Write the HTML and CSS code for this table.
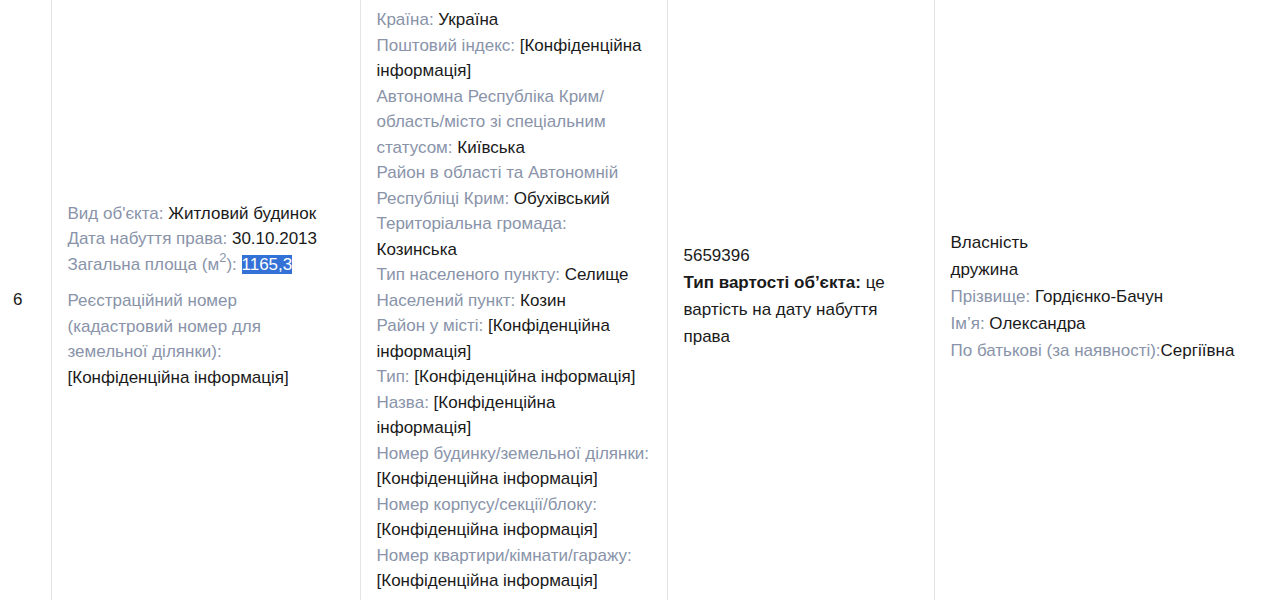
FILE: index.html
```html
<!DOCTYPE html>
<html lang="uk">
<head>
<meta charset="utf-8">
<link rel="stylesheet" href="styles.css">
</head>
<body>
<table class="decl">
  <colgroup>
    <col class="c-num">
    <col class="c-obj">
    <col class="c-addr">
    <col class="c-cost">
    <col class="c-own">
  </colgroup>
  <tr>
    <td class="num">6</td>
    <td>
      <div class="block">
        <span class="lbl">Вид об'єкта:</span> Житловий будинок<br>
        <span class="lbl">Дата набуття права:</span> 30.10.2013<br>
        <span class="lbl">Загальна площа (м<sup>2</sup>):</span> <span class="sel">1165,3</span>
      </div>
      <div class="block gap">
        <span class="lbl">Реєстраційний номер (кадастровий номер для земельної ділянки):</span><br>
        [Конфіденційна інформація]
      </div>
    </td>
    <td>
      <span class="lbl">Країна:</span> Україна<br>
      <span class="lbl">Поштовий індекс:</span> [Конфіденційна інформація]<br>
      <span class="lbl">Автономна Республіка Крим/ область/місто зі спеціальним статусом:</span> Київська<br>
      <span class="lbl">Район в області та Автономній Республіці Крим:</span> Обухівський<br>
      <span class="lbl">Територіальна громада:</span> Козинська<br>
      <span class="lbl">Тип населеного пункту:</span> Селище<br>
      <span class="lbl">Населений пункт:</span> Козин<br>
      <span class="lbl">Район у місті:</span> [Конфіденційна інформація]<br>
      <span class="lbl">Тип:</span> [Конфіденційна інформація]<br>
      <span class="lbl">Назва:</span> [Конфіденційна інформація]<br>
      <span class="lbl">Номер будинку/земельної ділянки:</span> [Конфіденційна інформація]<br>
      <span class="lbl">Номер корпусу/секції/блоку:</span> [Конфіденційна інформація]<br>
      <span class="lbl">Номер квартири/кімнати/гаражу:</span> [Конфіденційна інформація]
    </td>
    <td class="wide">
      5659396<br>
      <b>Тип вартості об’єкта:</b> це вартість на дату набуття права
    </td>
    <td class="wide">
      Власність<br>
      дружина<br>
      <span class="lbl">Прізвище:</span> Гордієнко-Бачун<br>
      <span class="lbl">Ім’я:</span> Олександра<br>
      <span class="lbl">По батькові (за наявності):</span>Сергіївна
    </td>
  </tr>
</table>
</body>
</html>
```
FILE: styles.css
```css
html, body {
  margin: 0;
  padding: 0;
  background: #fff;
}
body {
  font-family: "Liberation Sans", Arial, sans-serif;
  font-size: 17px;
  line-height: 25.5px;
  color: #1a1a1a;
  overflow: hidden;
}
.decl {
  border-collapse: collapse;
  table-layout: fixed;
  width: 1281px;
}
.c-num { width: 51px; }
.c-obj { width: 309px; }
.c-addr { width: 307px; }
.c-cost { width: 267px; }
.c-own { width: 347px; }
.decl td {
  vertical-align: middle;
  padding: 7px 16px 16px;
  border-left: 1px solid #e4e4e4;
  border-right: 1px solid #e4e4e4;
}
.decl td.num {
  border-left: none;
  padding-left: 13px;
  padding-right: 8px;
  padding-top: 6px;
}
.decl td.wide {
  line-height: 27px;
  padding-bottom: 24px;
}
.lbl {
  color: #8993a9;
}
.gap {
  margin-top: 11px;
  margin-bottom: 10px;
}
sup {
  font-size: 13px;
  line-height: 0;
  vertical-align: 8px;
}
.sel {
  background: #3471d6;
  color: #fff;
}
b {
  font-weight: bold;
}
```
